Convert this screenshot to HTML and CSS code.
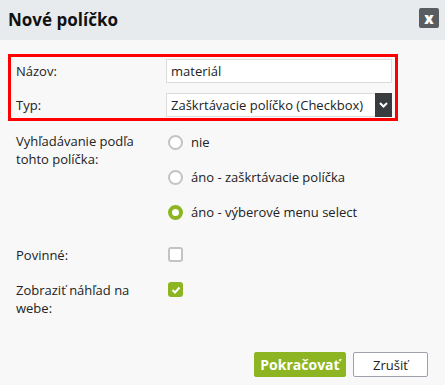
FILE: index.html
```html
<!DOCTYPE html>
<html lang="sk">
<head>
    <meta charset="UTF-8">
    <title>Nové políčko</title>
    <link rel="stylesheet" href="styles.css">
</head>
<body>
    <div class="dialog">
        <header class="dialog-header">
            <h1>Nové políčko</h1>
            <button class="close-btn" type="button">x</button>
        </header>

        <form class="dialog-body">
            <div class="highlight">
                <div class="field">
                    <label>Názov:</label>
                    <input type="text" class="input" value="materiál">
                </div>
                <div class="field">
                    <label>Typ:</label>
                    <div class="select">
                        <span>Zaškrtávacie políčko (Checkbox)</span>
                        <span class="select-arrow">
                            <svg width="9" height="6" viewBox="0 0 9 6"><path d="M1 1l3.5 3.5L8 1" fill="none" stroke="#fff" stroke-width="2"/></svg>
                        </span>
                    </div>
                </div>
            </div>

            <div class="field field-top">
                <label>Vyhľadávanie podľa tohto políčka:</label>
                <div class="options">
                    <div class="option"><span class="radio"></span>nie</div>
                    <div class="option"><span class="radio"></span>áno - zaškrtávacie políčka</div>
                    <div class="option"><span class="radio checked"></span>áno - výberové menu select</div>
                </div>
            </div>

            <div class="field field-top field-req">
                <label>Povinné:</label>
                <span class="check"></span>
            </div>

            <div class="field field-top field-preview">
                <label>Zobraziť náhľad na webe:</label>
                <span class="check checked">
                    <svg width="10" height="8" viewBox="0 0 10 8"><path d="M1.5 4l2.5 2.5L8.5 1.5" fill="none" stroke="#fff" stroke-width="2"/></svg>
                </span>
            </div>

            <div class="actions">
                <button type="button" class="btn btn-green">Pokračovať</button>
                <button type="button" class="btn btn-white">Zrušiť</button>
            </div>
        </form>
    </div>
</body>
</html>
```

FILE: styles.css
```css
* {
    box-sizing: border-box;
    margin: 0;
    padding: 0;
}

body {
    font-family: 'Open Sans', 'Liberation Sans', sans-serif;
    font-size: 13px;
    color: #222;
    background-color: #f8f8f8;
}

.dialog {
    width: 445px;
    height: 385px;
    background-color: #f8f8f8;
}

.dialog-header {
    height: 40px;
    background-color: #e8ebee;
    display: flex;
    align-items: center;
    justify-content: space-between;
    padding: 0 6px 0 8px;
}

.dialog-header h1 {
    font-size: 17px;
    font-weight: 700;
    color: #111;
    margin-top: -2px;
}

.close-btn {
    width: 20px;
    height: 20px;
    border: none;
    border-radius: 2px;
    background-color: #595d61;
    color: #fff;
    font-family: 'Open Sans', sans-serif;
    font-weight: 800;
    font-size: 15px;
    line-height: 18px;
    margin-top: -5px;
}

.dialog-body {
    padding: 14px 8px 0 8px;
}

.highlight {
    width: 390px;
    border: 3px solid #ff0000;
    padding: 2px 3px 1px 5px;
    display: flex;
    flex-direction: column;
    gap: 10px;
}

.field {
    display: grid;
    grid-template-columns: 150px 1fr;
    align-items: center;
}

.field-top {
    align-items: start;
    line-height: 18px;
    padding-left: 8px;
    width: 390px;
}

.input,
.select {
    height: 24px;
    border: 1px solid #dcdcdc;
    background-color: #fff;
    font-family: inherit;
    font-size: 13px;
    color: #222;
    padding: 0 4px;
}

.select {
    display: flex;
    align-items: center;
    justify-content: space-between;
    padding-right: 0;
}

.select-arrow {
    width: 17px;
    height: 24px;
    margin: -1px -1px -1px 0;
    background-color: #393c3f;
    display: flex;
    align-items: center;
    justify-content: center;
}

.highlight + .field {
    margin-top: 11px;
}

.options {
    display: flex;
    flex-direction: column;
    gap: 17px;
    padding-top: 1px;
}

.option {
    display: flex;
    align-items: center;
    height: 18px;
}

.radio {
    width: 15px;
    height: 15px;
    border: 2px solid #c3c3c3;
    border-radius: 50%;
    background-color: #fff;
    margin: 0 8px 0 2px;
}

.radio.checked {
    border: 4px solid #8cb521;
}

.check {
    width: 15px;
    height: 15px;
    border: 2px solid #c3c3c3;
    border-radius: 3px;
    background-color: #fff;
    margin: 1px 0 0 2px;
    display: flex;
    align-items: center;
    justify-content: center;
}

.check.checked {
    border: none;
    background-color: #8cb521;
}

.field-req {
    margin-top: 25px;
}

.field-preview {
    margin-top: 17px;
}

.actions {
    display: flex;
    justify-content: flex-end;
    gap: 7px;
    margin-top: 35px;
    padding-right: 9px;
}

.btn {
    height: 25px;
    font-family: inherit;
    font-size: 13px;
    border-radius: 2px;
    cursor: pointer;
}

.btn-green {
    width: 92px;
    background-color: #8cb521;
    border: 1px solid #8cb521;
    color: #fff;
    font-weight: 700;
    font-size: 14px;
}

.btn-white {
    width: 75px;
    background-color: #fff;
    border: 1px solid #9da2aa;
    color: #222;
}
```
